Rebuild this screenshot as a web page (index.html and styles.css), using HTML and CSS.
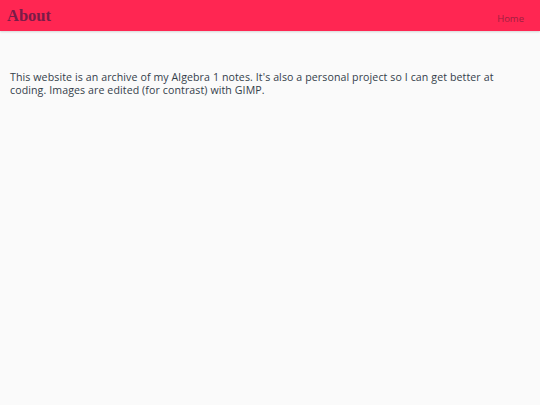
FILE: index.html
```html
<!DOCTYPE html>
<html>
<head>
<meta charset="utf-8">
<link rel="stylesheet" href="styles.css">
</head>
<body>
<header class="topbar">
  <h1 class="title">About</h1>
  <nav class="nav"><a class="nav-link" href="#">Home</a></nav>
</header>
<main class="content">
  <p class="text">This website is an archive of my Algebra 1 notes. It's also a personal project so I can get better at coding. Images are edited (for contrast) with GIMP.</p>
</main>
</body>
</html>
```
FILE: styles.css
```css
html, body {
  margin: 0;
  padding: 0;
  background: #fafafa;
}
body {
  font-family: "Open Sans", sans-serif;
}
.topbar {
  height: 31px;
  background: #ff2652;
  display: flex;
  align-items: center;
  justify-content: space-between;
  padding: 0 16px 0 7px;
  box-shadow: 0 1px 2px rgba(0,0,0,0.15);
}
.title {
  margin: 0;
  font-family: "Liberation Serif", serif;
  font-weight: bold;
  font-size: 16.5px;
  color: #7a1c48;
}
.nav-link {
  font-size: 9.5px;
  color: #a01f40;
  text-decoration: none;
}
.content {
  padding: 40px 10px 0 10px;
}
.text {
  margin: 0;
  font-size: 10.6px;
  letter-spacing: 0.1px;
  line-height: 13px;
  color: #34404a;
}
```
